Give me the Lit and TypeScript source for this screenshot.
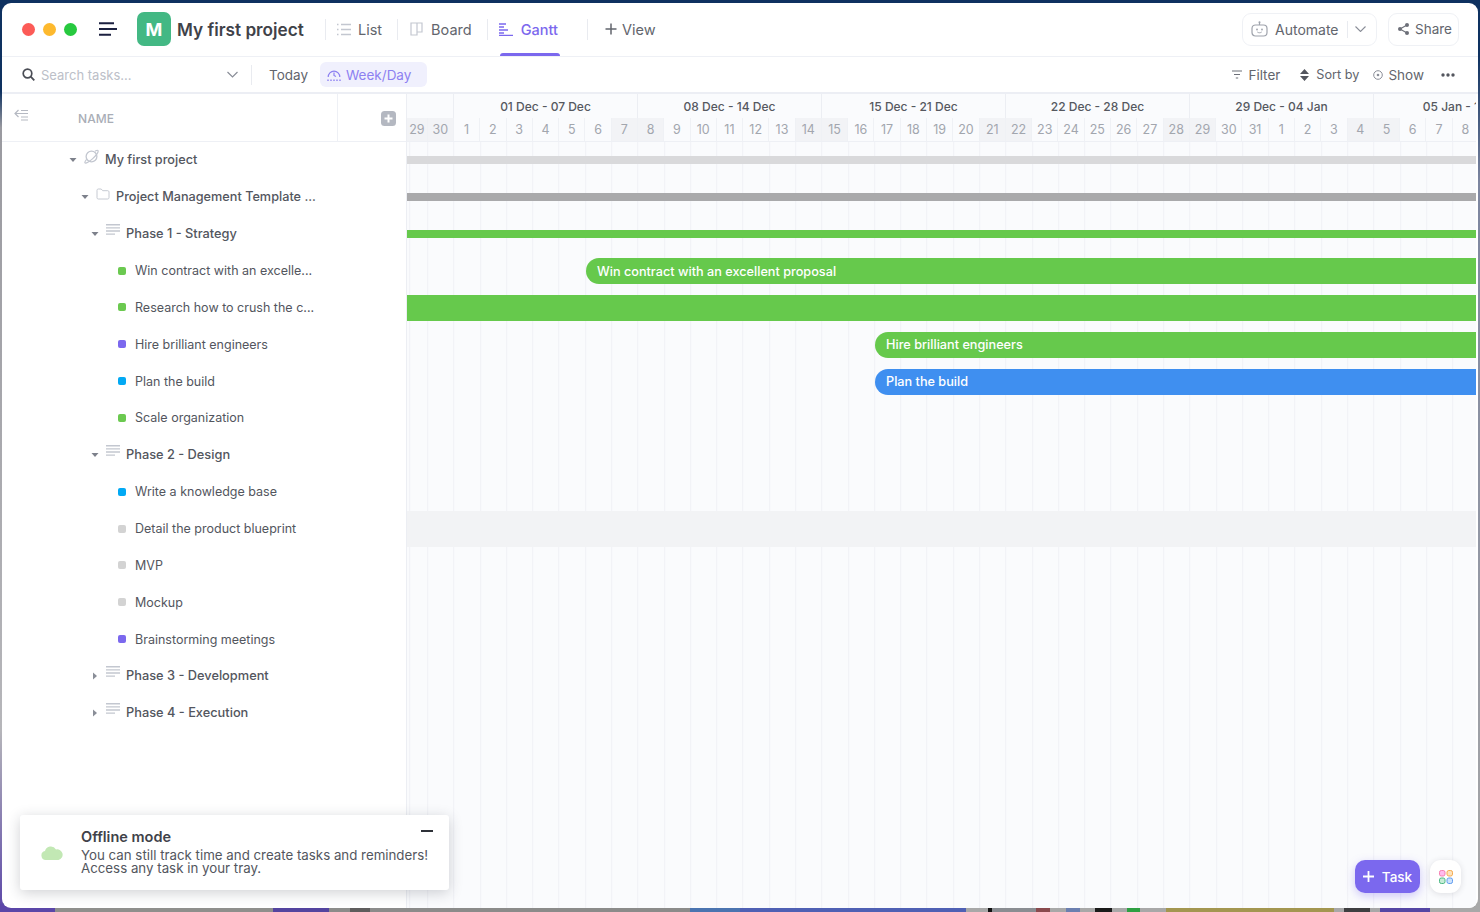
import { LitElement, html, css, svg } from "lit";
import { customElement } from "lit/decorators.js";

const CELL = 184 / 7;
const days: { d: number; shade: boolean }[] = [
  [29, 1], [30, 1], [1, 0], [2, 0], [3, 0], [4, 0], [5, 0], [6, 0], [7, 1], [8, 1], [9, 0], [10, 0], [11, 0], [12, 0], [13, 0], [14, 1], [15, 1], [16, 0], [17, 0], [18, 0], [19, 0], [20, 0], [21, 1], [22, 1], [23, 0], [24, 0], [25, 0], [26, 0], [27, 0], [28, 1], [29, 1], [30, 0], [31, 0], [1, 0], [2, 0], [3, 0], [4, 1], [5, 1], [6, 0], [7, 0], [8, 0],
].map(([d, s]) => ({ d, shade: !!s }));
const weeks = ["", "01 Dec - 07 Dec", "08 Dec - 14 Dec", "15 Dec - 21 Dec", "22 Dec - 28 Dec", "29 Dec - 04 Jan", "05 Jan - 11 Jan"];

const desk: [number, string][] = [
  [55, "#5b46a8"], [218, "#8f8f8c"], [56, "#54449f"], [21, "#8c8c8a"], [20, "#5e5c5c"], [320, "#8b8b8a"], [50, "#4b74b0"], [226, "#4f60b4"], [22, "#a8a8a8"], [4, "#111"], [44, "#8a8d92"], [14, "#8a4a4e"], [16, "#a8a8a8"], [14, "#6b7fb0"], [15, "#a8a8a8"], [17, "#1a1a1a"], [15, "#a8a8a8"], [13, "#2ea043"], [26, "#a8a8a8"], [168, "#a39650"], [10, "#a8a8a8"], [26, "#3e3e40"], [10, "#a8a8a8"], [50, "#5546a4"], [50, "#a8a8a8"],
];

type Row = { kind: "space" | "folder" | "list" | "task"; label: string; open?: boolean; color?: string };
const rows: Row[] = [
  { kind: "space", label: "My first project", open: true },
  { kind: "folder", label: "Project Management Template ...", open: true },
  { kind: "list", label: "Phase 1 - Strategy", open: true },
  { kind: "task", label: "Win contract with an excelle...", color: "#6bc950" },
  { kind: "task", label: "Research how to crush the c...", color: "#6bc950" },
  { kind: "task", label: "Hire brilliant engineers", color: "#7b68ee" },
  { kind: "task", label: "Plan the build", color: "#02a9f4" },
  { kind: "task", label: "Scale organization", color: "#6bc950" },
  { kind: "list", label: "Phase 2 - Design", open: true },
  { kind: "task", label: "Write a knowledge base", color: "#02a9f4" },
  { kind: "task", label: "Detail the product blueprint", color: "#d3d3d3" },
  { kind: "task", label: "MVP", color: "#d3d3d3" },
  { kind: "task", label: "Mockup", color: "#d3d3d3" },
  { kind: "task", label: "Brainstorming meetings", color: "#7b68ee" },
  { kind: "list", label: "Phase 3 - Development" },
  { kind: "list", label: "Phase 4 - Execution" },
];

type Bar = { cls: string; left?: number; color: string; label?: string } | null;
const bars: Bar[] = [
  { cls: "thin", color: "#d9d9db" },
  { cls: "thin", color: "#a9a9ab" },
  { cls: "thin", color: "#66c94c" },
  { cls: "pill", left: 179, color: "#66c94c", label: "Win contract with an excellent proposal" },
  { cls: "full", color: "#66c94c" },
  { cls: "pill", left: 468, color: "#66c94c", label: "Hire brilliant engineers" },
  { cls: "pill", left: 468, color: "#3f8ff0", label: "Plan the build" },
  null, null, null, null, null, null, null, null, null,
];

const listIcon = svg`<svg class="ic-list" viewBox="0 0 14 13" width="14" height="13"><path d="M0 .75h14M0 3.9h14M0 7h14M0 10.2h9" fill="none" stroke="#c3c7d0" stroke-width="1.3"/></svg>`;
const folderIcon = svg`<svg class="ic-folder" viewBox="0 0 14 12" width="14" height="12"><path d="M1 2.2c0-.7.5-1.2 1.2-1.2h3l1.5 1.7h5.1c.7 0 1.2.5 1.2 1.2v5.9c0 .7-.5 1.2-1.2 1.2H2.2c-.7 0-1.2-.5-1.2-1.2z" fill="none" stroke="#c6cad2" stroke-width="1"/></svg>`;
const spaceIcon = svg`<svg class="ic-space" viewBox="0 0 15 15" width="15" height="15"><circle cx="7.5" cy="7.5" r="5.4" fill="none" stroke="#c3c7d0" stroke-width="1.3"/><path d="M2.6 10.4C1.2 12 .6 13.3 1 13.8c.8.9 4.3-1 7.7-4.2C12 6.4 14.6 2.6 14 1.6c-.4-.6-1.5-.3-3 .6" fill="none" stroke="#c3c7d0" stroke-width="1.2"/></svg>`;

@customElement("app-root")
export class AppRoot extends LitElement {
  static styles = css`
    :host { display: block; position: relative; width: 1480px; height: 912px; overflow: hidden; background: #0e3160; font-family: Inter, "Liberation Sans", sans-serif; color: #4a4d55; }
    .desk-bottom { position: absolute; left: 0; right: 0; bottom: 0; height: 8px; display: flex; }
    .desk-bottom i { display: block; height: 100%; flex: none; }
    .desk-left { position: absolute; left: 0; top: 0; bottom: 0; width: 3px; background: linear-gradient(#0e3160 0, #0e3160 10%, #9a9aa0 14%, #b6b6ba 80%, #5b46a8 100%); }
    .desk-right { position: absolute; right: 0; top: 0; bottom: 0; width: 4px; background: linear-gradient(#0e3160 0, #0e3160 6%, #7d86a0 20%, #a8a8a8 100%); }
    .window { position: absolute; left: 2px; top: 3px; width: 1476px; height: 905px; background: #fff; border-radius: 9px; overflow: hidden; display: flex; flex-direction: column; }
    .header { flex: none; height: 52px; padding-bottom: 1px; border-bottom: 1.5px solid #eef0f5; box-sizing: content-box; display: flex; align-items: center; padding-left: 20px; }
    .lights { display: flex; gap: 8px; margin-right: 22px; }
    .lights i { width: 13px; height: 13px; border-radius: 50%; display: block; }
    .burger { margin-right: 20px; display: block; }
    .logo { width: 34px; height: 34px; border-radius: 7px; background: #43b884; color: #fff; font-weight: 700; font-size: 18px; display: flex; align-items: center; justify-content: center; margin-right: 6px; }
    .title { font-size: 17.2px; font-weight: 600; color: #3f4249; width: 148px; white-space: nowrap; }
    .vsep { width: 1px; height: 21px; background: #e9ebf0; flex: none; }
    .tab { display: flex; align-items: center; font-size: 14.5px; color: #62656d; height: 52px; position: relative; white-space: nowrap; }
    .tab svg { margin-right: 7px; display: block; }
    .tab.list { padding: 0 15px 0 11px; }
    .tab.board { padding: 0 15px 0 12px; }
    .tab.gantt { padding: 0 29px 0 11px; color: #7b68ee; font-weight: 500; }
    .tab.gantt svg { margin-right: 8px; }
    .tab.gantt::after { content: ""; position: absolute; left: 12px; width: 60px; bottom: -1px; height: 3px; border-radius: 3px 3px 0 0; background: #7b68ee; }
    .tab.view { padding-left: 17px; }
    .spacer { flex: 1; }
    .btn { border: 1.5px solid #eff1f5; border-radius: 9px; height: 33px; box-sizing: border-box; display: flex; align-items: center; font-size: 14px; color: #62656d; white-space: nowrap; }
    .automate { width: 135px; padding-left: 8px; margin-right: 11px; }
    .automate svg:first-child { margin-right: 7px; }
    .automate .vsep { height: 17px; margin: 0 7px 0 8px; }
    .share { width: 71px; padding-left: 9px; margin-right: 19px; gap: 6px; font-size: 13.5px; }
    .toolbar { flex: none; height: 35px; border-bottom: 2px solid #eceef4; display: flex; align-items: center; padding-left: 20px; font-size: 13.5px; color: #62656d; white-space: nowrap; }
    .search { color: #bcc0c8; width: 186px; margin-left: 6px; font-size: 13px; }
    .toolbar .vsep { margin: 0 17px 0 13px; height: 20px; }
    .today { margin-right: 12px; }
    .weekday { height: 25px; width: 107px; box-sizing: border-box; border-radius: 6px; background: #f0f0fd; color: #8d80f1; display: flex; align-items: center; padding-left: 7px; gap: 5px; }
    .tool { display: flex; align-items: center; gap: 6px; }
    .tool.filter { margin-right: 20px; }
    .tool.sort { margin-right: 14px; gap: 7px; font-size: 12.7px; }
    .tool.show { margin-right: 17px; gap: 5px; }
    .dots { margin-right: 23px; display: block; }
    .main { flex: 1; display: flex; min-height: 0; }
    .side { flex: none; width: 404px; border-right: 1.5px solid #eceef3; box-sizing: content-box; display: flex; flex-direction: column; }
    .side-head { flex: none; height: 46.5px; border-bottom: 1.5px solid #eef0f5; display: flex; }
    .side-name { width: 336px; box-sizing: border-box; border-right: 1.5px solid #eef0f5; display: flex; padding: 15px 0 0 12px; }
    .side-name span { font-size: 12px; font-weight: 500; color: #a9adb6; margin: 2px 0 0 49px; letter-spacing: .1px; }
    .side-add { flex: 1; display: flex; justify-content: flex-end; padding: 17px 10px 0 0; }
    .tree { flex: none; }
    .row { height: 36.86px; display: flex; align-items: center; font-size: 12.7px; font-weight: 500; color: #53565e; white-space: nowrap; }
    .row.task { font-weight: 400; font-size: 12.5px; }
    .row.list { font-size: 12.8px; }
    .caret { display: block; margin-right: 7px; flex: none; }
    .row svg[class^="ic-"] { margin: -6px 6px 0 0; flex: none; display: block; }
    .dot { width: 8px; height: 8px; border-radius: 2px; margin-right: 9px; flex: none; }
    .chart { flex: 1; min-width: 0; overflow: hidden; display: flex; flex-direction: column; background-color: #fafbfd; margin-right: 2px; }
    .weeks { display: flex; flex: none; height: 24px; }
    .wk { flex: none; box-sizing: border-box; display: flex; align-items: center; justify-content: center; font-size: 12px; font-weight: 500; color: #55585f; border-right: 1px solid #eceef3; white-space: nowrap; overflow: hidden; }
    .days { display: flex; flex: none; height: 24px; box-sizing: border-box; border-bottom: 1.5px solid #eef0f5; }
    .day { flex: none; box-sizing: border-box; display: flex; align-items: center; justify-content: center; font-size: 12.5px; color: #a2a6ae; border-right: 1px solid #eff1f5; }
    .day.shade { background: #f2f3f6; }
    .body { flex: 1; position: relative; background-image: repeating-linear-gradient(90deg, #f0f1f5 0 1px, transparent 1px ${CELL}px); background-position: 20.2px 0; }
    .band { height: 36.86px; display: flex; align-items: center; }
    .band.hl { background: #f2f3f5; }
    .bar { width: 100%; }
    .thin { height: 8px; }
    .full { height: 26px; }
    .pill { height: 26px; border-radius: 13px 0 0 13px; color: #fff; font-size: 12.7px; font-weight: 500; display: flex; align-items: center; padding-left: 11px; box-sizing: border-box; white-space: nowrap; }
    .notice { position: absolute; left: 18px; bottom: 18px; width: 429px; height: 75px; box-sizing: border-box; background: #fff; border-radius: 3px; box-shadow: 0 3px 14px rgba(40,45,60,.22); display: flex; align-items: center; padding: 0 0 0 21px; }
    .notice-text { align-self: flex-start; margin-left: 18px; padding-top: 13px; font-size: 13.3px; line-height: 13px; color: #53565e; white-space: nowrap; }
    .notice-text b { display: block; font-size: 14.5px; font-weight: 600; line-height: 18px; margin-bottom: 2.5px; color: #3f4249; }
    .minus { position: absolute; right: 16px; top: 15px; width: 12px; height: 2px; background: #2e3138; }
    .fab { position: absolute; right: 17px; bottom: 15px; display: flex; gap: 10px; }
    .task-btn { width: 65px; height: 33px; border-radius: 10px; background: #7b68ee; color: #fff; font-size: 13.5px; font-weight: 500; display: flex; align-items: center; justify-content: center; gap: 8px; box-shadow: 0 3px 10px rgba(123,104,238,.35); }
    .apps { width: 31px; height: 33px; border-radius: 11px; background: #fff; box-shadow: 0 1px 6px rgba(40,45,60,.14); display: flex; align-items: center; justify-content: center; }
  `;

  private caret(open?: boolean) {
    return open
      ? html`<svg class="caret" width="8" height="6" viewBox="0 0 8 6"><path d="M.5 1h7L4 5z" fill="#7d818b"/></svg>`
      : html`<svg class="caret" width="8" height="8" viewBox="0 0 8 8"><path d="M2 .5v7L6 4z" fill="#8a8e98"/></svg>`;
  }

  private renderRow(r: Row) {
    const pad = { space: 67, folder: 79, list: 89, task: 116 }[r.kind];
    const icon = r.kind === "space" ? spaceIcon : r.kind === "folder" ? folderIcon : r.kind === "list" ? listIcon : null;
    return html`<div class="row ${r.kind}" style="padding-left:${pad}px">
      ${r.kind === "task"
        ? html`<span class="dot" style="background:${r.color}"></span>`
        : html`${this.caret(r.open)}${icon}`}
      <span>${r.label}</span>
    </div>`;
  }

  render() {
    const firstDay = 20.7;
    return html`
      <div class="desk-left"></div>
      <div class="desk-right"></div>
      <div class="desk-bottom">
        ${desk.map(([w, c]) => html`<i style="width:${w}px;background:${c}"></i>`)}
      </div>
      <div class="window">
        <div class="header">
          <div class="lights"><i style="background:#fc5b57"></i><i style="background:#fdb92e"></i><i style="background:#27c93f"></i></div>
          <svg class="burger" width="18" height="14" viewBox="0 0 18 14"><path d="M0 1.2h15M0 7h18M0 12.8h12" stroke="#1c2140" stroke-width="2" fill="none"/></svg>
          <div class="logo">M</div>
          <div class="title">My first project</div>
          <div class="vsep"></div>
          <div class="tab list"><svg width="14" height="13" viewBox="0 0 14 13"><path d="M4 1.5h10M4 6.5h10M4 11.5h10M0 1.5h1.5M0 6.5h1.5M0 11.5h1.5" stroke="#c3c7d0" stroke-width="1.3" fill="none"/></svg>List</div>
          <div class="vsep"></div>
          <div class="tab board"><svg width="13" height="14" viewBox="0 0 13 14"><path d="M1 1h11v9H7v3H1zM7 1v9" stroke="#c3c7d0" stroke-width="1.2" fill="none"/></svg><span style="margin-left:1px">Board</span></div>
          <div class="vsep"></div>
          <div class="tab gantt"><svg width="14" height="13" viewBox="0 0 14 13"><path d="M0 1h7M0 4h5M0 7h9M0 10h5M0 12.3h14" stroke="#7b68ee" stroke-width="1.3" fill="none"/></svg>Gantt</div>
          <div class="vsep"></div>
          <div class="tab view"><svg width="12" height="12" viewBox="0 0 12 12"><path d="M6 .5v11M.5 6h11" stroke="#62656d" stroke-width="1.5" fill="none"/></svg><span style="margin-left:-2px">View</span></div>
          <div class="spacer"></div>
          <div class="btn automate">
            <svg width="17" height="16" viewBox="0 0 17 16"><rect x="1" y="4" width="15" height="11" rx="3.5" fill="none" stroke="#9ea2ab" stroke-width="1.2"/><path d="M8.5 4V1.5" stroke="#9ea2ab" stroke-width="1.2"/><circle cx="8.5" cy="1.3" r="1" fill="#9ea2ab"/><circle cx="6" cy="8.5" r=".9" fill="#9ea2ab"/><circle cx="11" cy="8.5" r=".9" fill="#9ea2ab"/><path d="M6.3 11c1.3 1 3.1 1 4.4 0" stroke="#9ea2ab" stroke-width="1" fill="none"/></svg>
            Automate
            <div class="vsep"></div>
            <svg width="11" height="6" viewBox="0 0 11 6"><path d="M.5.5 5.5 5.5l5-5" stroke="#8a8e98" stroke-width="1.1" fill="none"/></svg>
          </div>
          <div class="btn share">
            <svg width="11" height="12" viewBox="0 0 11 12"><circle cx="2" cy="6" r="2" fill="#6d7079"/><circle cx="9" cy="2" r="2" fill="#6d7079"/><circle cx="9" cy="10" r="2" fill="#6d7079"/><path d="M2 6l7-4M2 6l7 4" stroke="#6d7079" stroke-width="1.1"/></svg>
            Share
          </div>
        </div>
        <div class="toolbar">
          <svg width="13" height="13" viewBox="0 0 13 13"><circle cx="5.5" cy="5.5" r="4.3" fill="none" stroke="#4a4d55" stroke-width="1.7"/><path d="M8.7 8.7 12.3 12.3" stroke="#4a4d55" stroke-width="1.8"/></svg>
          <div class="search">Search tasks...</div>
          <svg width="11" height="7" viewBox="0 0 11 7"><path d="M.5 1 5.5 6l5-5" stroke="#8a8e98" stroke-width="1.2" fill="none"/></svg>
          <div class="vsep"></div>
          <div class="today">Today</div>
          <div class="weekday">
            <svg width="14" height="14" viewBox="0 0 14 14"><path d="M1.2 9A5.8 5.8 0 0 1 12.8 9M7 4.5V7.5L9 8.5" stroke="#8d80f1" stroke-width="1.2" fill="none"/><path d="M1 11.5V13M4 11.5V13M7 11.5V13M10 11.5V13M13 11.5V13" stroke="#8d80f1" stroke-width="1.4"/></svg>
            Week/Day
          </div>
          <div class="spacer"></div>
          <div class="tool filter"><svg width="10" height="9" viewBox="0 0 10 9"><path d="M0 1h10M2 4.5h6M3.8 8h2.4" stroke="#6d7079" stroke-width="1.2" fill="none"/></svg>Filter</div>
          <div class="tool sort"><svg width="9" height="12" viewBox="0 0 9 12"><path d="M4.5 0 9 5H0zM4.5 12 0 7h9z" fill="#53565e"/></svg>Sort by</div>
          <div class="tool show"><svg width="10" height="10" viewBox="0 0 10 10"><circle cx="5" cy="5" r="4.3" fill="none" stroke="#8a8e98" stroke-width="1"/><circle cx="5" cy="5" r="1.3" fill="#8a8e98"/></svg>Show</div>
          <svg class="dots" width="14" height="4" viewBox="0 0 14 4"><circle cx="2" cy="2" r="1.7" fill="#53565e"/><circle cx="7" cy="2" r="1.7" fill="#53565e"/><circle cx="12" cy="2" r="1.7" fill="#53565e"/></svg>
        </div>
        <div class="main">
          <div class="side">
            <div class="side-head">
              <div class="side-name">
                <svg width="15" height="12" viewBox="0 0 15 12"><path d="M4.5 1 1 4.5 4.5 8M1 4.5h13M7 1.5h7M7 8h7M7 11h7" stroke="#b5b9c2" stroke-width="1.2" fill="none"/></svg>
                <span>NAME</span>
              </div>
              <div class="side-add">
                <svg width="15" height="15" viewBox="0 0 15 15"><rect width="15" height="15" rx="3.5" fill="#b4b8c1"/><path d="M7.5 3.5v8M3.5 7.5h8" stroke="#fff" stroke-width="2"/></svg>
              </div>
            </div>
            <div class="tree">${rows.map((r) => this.renderRow(r))}</div>
          </div>
          <div class="chart">
            <div class="weeks">
              ${weeks.map((w, i) => html`<div class="wk" style="width:${i === 0 ? firstDay + CELL : CELL * 7}px">${w}</div>`)}
            </div>
            <div class="days">
              ${days.map((d, i) => html`<div class="day ${d.shade ? "shade" : ""}" style="width:${i === 0 ? firstDay : CELL}px">${d.d}</div>`)}
            </div>
            <div class="body">
              ${bars.map((b, i) => html`<div class="band ${i === 10 ? "hl" : ""}">
                ${b ? html`<div class="bar ${b.cls}" style="background:${b.color};margin-left:${b.left ?? 0}px">${b.label ?? ""}</div>` : ""}
              </div>`)}
            </div>
          </div>
        </div>
        <div class="notice">
          <svg width="22" height="15" viewBox="0 0 22 15"><path d="M5 15a4.5 4.5 0 0 1-1-8.900A6 6 0 0 1 15 4.500 5.300 5.300 0 0 1 17.500 15z" fill="#c2e8b4"/></svg>
          <div class="notice-text"><b>Offline mode</b>You can still track time and create tasks and reminders!<br />Access any task in your tray.</div>
          <div class="minus"></div>
        </div>
        <div class="fab">
          <div class="task-btn"><svg width="11" height="11" viewBox="0 0 11 11"><path d="M5.5 0v11M0 5.5h11" stroke="#fff" stroke-width="1.8"/></svg>Task</div>
          <div class="apps">
            <svg width="14" height="14" viewBox="0 0 14 14"><rect x=".5" y=".5" width="5.5" height="5.5" rx="1.8" fill="#fbe" stroke="#f57fb0"/><rect x="8" y=".5" width="5.5" height="5.5" rx="1.8" fill="#fde3bd" stroke="#f5a94d"/><rect x=".5" y="8" width="5.5" height="5.5" rx="1.8" fill="#c7ecd6" stroke="#4cb884"/><rect x="8" y="8" width="5.5" height="5.5" rx="1.8" fill="#cfe3fb" stroke="#5f9bef"/></svg>
          </div>
        </div>
      </div>
    `;
  }
}
